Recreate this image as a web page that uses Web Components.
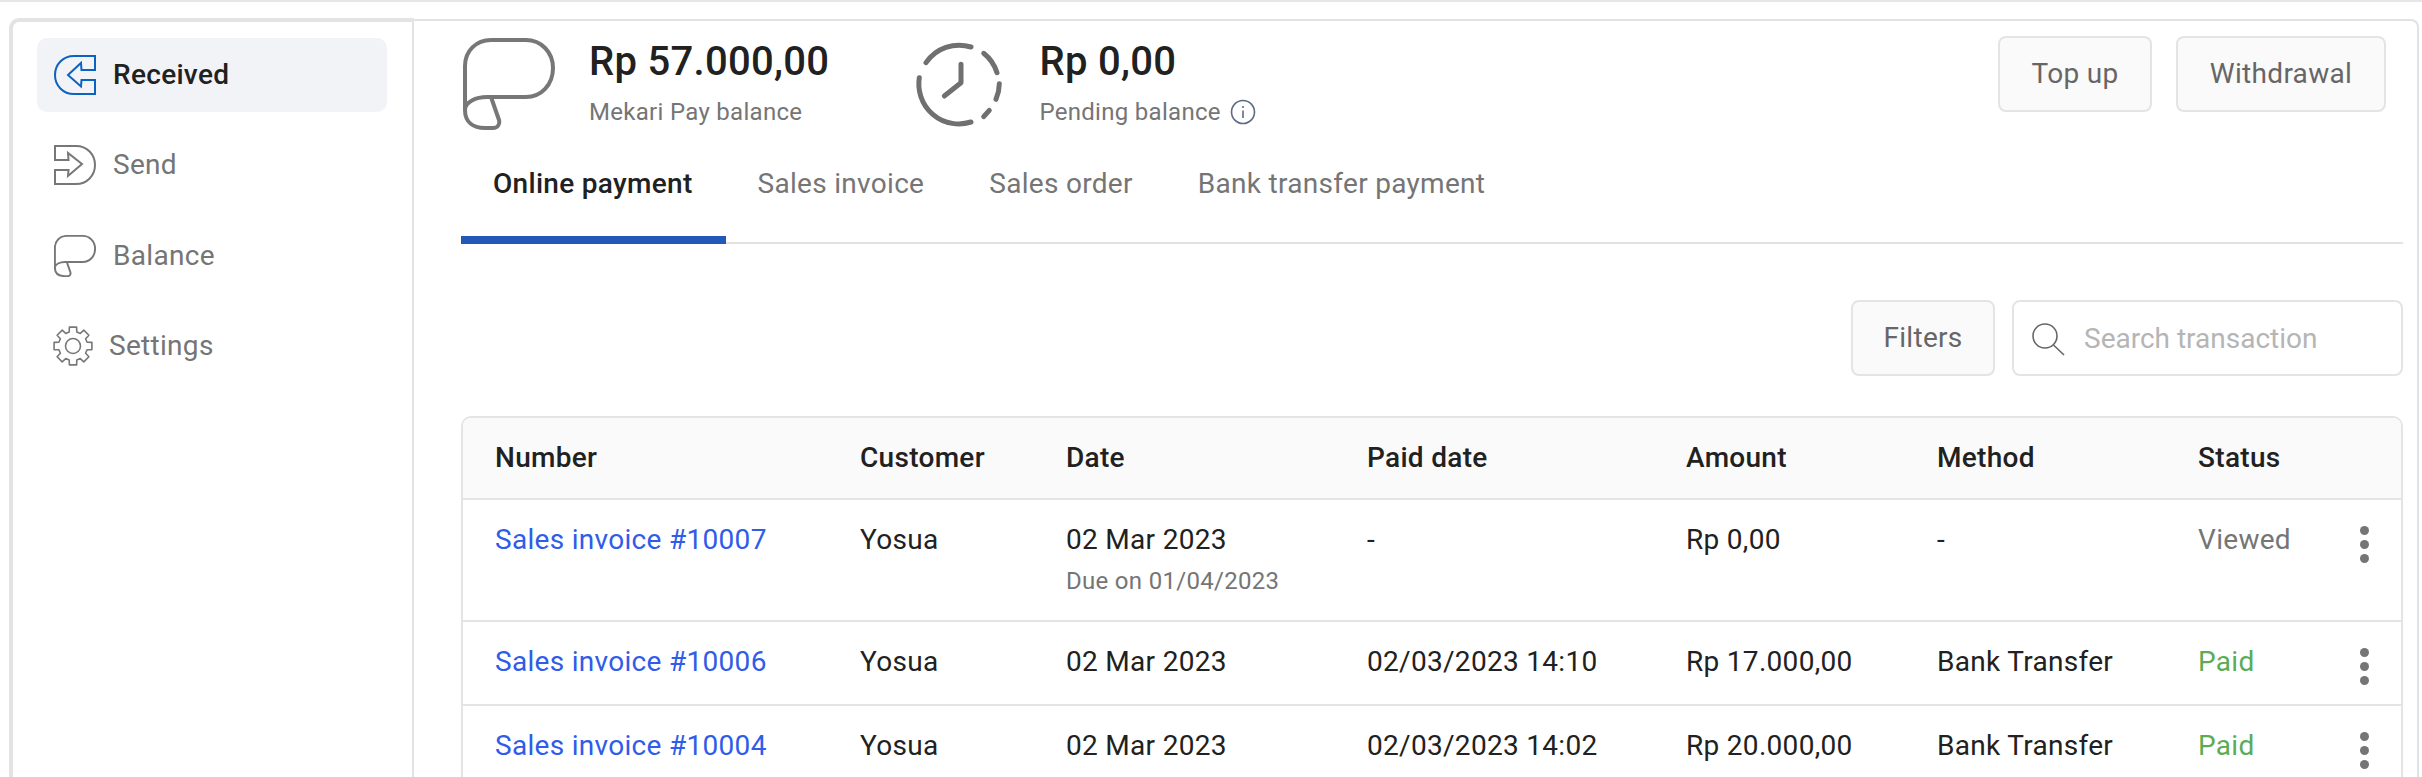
<!DOCTYPE html>
<html>
<head>
<meta charset="utf-8">
<title>Mekari Pay</title>
<style>
    html, body { margin: 0; height: 777px; overflow: hidden; background: #fff; }
    body { font-family: Roboto, "Liberation Sans", sans-serif; color: #212121; letter-spacing: 0.3px; }
</style>
</head>
<body>
<app-shell>
    <side-nav slot="nav">
        <nav-item active label="Received" icon="received"></nav-item>
        <nav-item label="Send" icon="send"></nav-item>
        <nav-item label="Balance" icon="balance"></nav-item>
        <nav-item label="Settings" icon="settings"></nav-item>
    </side-nav>
    <balance-head>
        <balance-stat slot="stats" icon="balance" value="Rp 57.000,00" label="Mekari Pay balance"></balance-stat>
        <balance-stat slot="stats" icon="clock" value="Rp 0,00" label="Pending balance" info></balance-stat>
        <tool-button slot="actions" width="154">Top up</tool-button>
        <tool-button slot="actions" width="210">Withdrawal</tool-button>
    </balance-head>
    <tab-bar>
        <tab-item active>Online payment</tab-item>
        <tab-item>Sales invoice</tab-item>
        <tab-item>Sales order</tab-item>
        <tab-item>Bank transfer payment</tab-item>
    </tab-bar>
    <tool-bar>
        <tool-button width="144">Filters</tool-button>
        <search-box placeholder="Search transaction"></search-box>
    </tool-bar>
    <tx-table>
        <tx-row head>
            <span>Number</span><span>Customer</span><span>Date</span><span>Paid date</span><span>Amount</span><span>Method</span><span>Status</span>
        </tx-row>
        <tx-row>
            <a>Sales invoice #10007</a><span>Yosua</span><span>02 Mar 2023<small>Due on 01/04/2023</small></span><span>-</span><span>Rp 0,00</span><span>-</span><em class="viewed">Viewed</em><row-menu></row-menu>
        </tx-row>
        <tx-row>
            <a>Sales invoice #10006</a><span>Yosua</span><span>02 Mar 2023</span><span>02/03/2023 14:10</span><span>Rp 17.000,00</span><span>Bank Transfer</span><em class="paid">Paid</em><row-menu></row-menu>
        </tx-row>
        <tx-row>
            <a>Sales invoice #10004</a><span>Yosua</span><span>02 Mar 2023</span><span>02/03/2023 14:02</span><span>Rp 20.000,00</span><span>Bank Transfer</span><em class="paid">Paid</em><row-menu></row-menu>
        </tx-row>
    </tx-table>
</app-shell>

<script>
// 8 tooth gear, drawn around 20,20 in a 40 box
function gearPath() {
    let d = "";
    const n = 8;
    for (let i = 0; i < n; i++) {
        const a = (i / n) * Math.PI * 2 - Math.PI / 2;
        const pts = [[14.6, -0.26], [19.2, -0.19], [19.2, 0.19], [14.6, 0.26]];
        pts.forEach(([r, off], j) => {
            const x = 20 + r * Math.cos(a + off);
            const y = 20 + r * Math.sin(a + off);
            d += (i === 0 && j === 0 ? "M" : "L") + x.toFixed(1) + " " + y.toFixed(1);
        });
    }
    return d + "Z";
}

const balancePath = "M2 72V28C2 13 13 2 28 2H63C78 2 90 14 90 30C90 47 78 59 63 59H24C13 59 2 64 2 72C2 84 10 90 22 90H30C35 90 37 86 36 82L28 59";

const ICONS = {
    received: `<svg width="42" height="40" viewBox="0 0 42 40" fill="none" stroke="#0b63c1" stroke-width="2"><path d="M41 1H20C9 1 1 9.5 1 20S9 39 20 39H41V25H27.5L27 31.5L14 20L27 8L27.5 15H41Z"/></svg>`,
    send: `<svg width="42" height="40" viewBox="0 0 42 40" fill="none" stroke="#777" stroke-width="2"><path d="M1 1H22C33 1 41 9.5 41 20S33 39 22 39H1V25H14.500L14 31L28 19L14 8L14.500 15H1Z"/></svg>`,
    balance: `<svg width="42" height="42" viewBox="0 0 92 92" fill="none" stroke="#777" stroke-width="4.2" stroke-linejoin="round"><path d="${balancePath}"/></svg>`,
    settings: `<svg width="40" height="40" viewBox="0 0 40 40" fill="none" stroke="#777" stroke-width="1.6" stroke-linejoin="round"><path d="${gearPath()}"/><circle cx="20" cy="20" r="7.500"/></svg>`,
    bigBalance: `<svg width="92" height="92" viewBox="0 0 92 92" fill="none" stroke="#777" stroke-width="4" stroke-linejoin="round"><path d="${balancePath}"/></svg>`,
    clock: `<svg width="92" height="92" viewBox="0 0 92 92" fill="none" stroke="#707070" stroke-width="5" stroke-linecap="round" stroke-linejoin="round"><path d="M14 24.700A40 40 0 0 1 59 9"/><path d="M71.700 15.300A40 40 0 0 1 85 34.700"/><path d="M87.300 45.700A40 40 0 0 1 84 61.300"/><path d="M77.300 72.300L71.700 78.700"/><path d="M59 84A40 40 0 0 1 7.300 39.700"/><path d="M49 26.300V44.700L32.300 58"/></svg>`
};

class AppShell extends HTMLElement {
    constructor() {
        super();
        this.attachShadow({ mode: "open" });
    }

    connectedCallback() {
        this.shadowRoot.innerHTML = `
            <style>
                :host { display: block; border-top: 2px solid #e6e6e6; padding: 16px 3px 0 9px; }
                .frame { display: flex; align-items: flex-start; }
                main {
                    flex: 1;
                    min-width: 0;
                    margin-top: 1px;
                    padding: 15px 14px 0 47px;
                    border-top: 2px solid #dfe3e6;
                    border-right: 2px solid #dfe3e6;
                    border-top-right-radius: 8px;
                }
            </style>
            <div class="frame">
                <slot name="nav"></slot>
                <main><slot></slot></main>
            </div>
        `;
    }
}

class SideNav extends HTMLElement {
    constructor() {
        super();
        this.attachShadow({ mode: "open" });
    }

    connectedCallback() {
        this.shadowRoot.innerHTML = `
            <style>
                :host {
                    display: flex;
                    flex-direction: column;
                    gap: 16.33px;
                    width: 350px;
                    height: 800px;
                    padding: 16px 25px 0 24px;
                    border-left: 4px solid #e3e3e3;
                    border-top: 4px solid #e3e3e3;
                    border-right: 2px solid #dfe3e6;
                    border-top-left-radius: 10px;
                }
            </style>
            <slot></slot>
        `;
    }
}

class NavItem extends HTMLElement {
    constructor() {
        super();
        this.attachShadow({ mode: "open" });
    }

    connectedCallback() {
        const icon = this.getAttribute("icon");
        const isGear = icon === "settings";
        // text sits a pixel higher on the first two rows
        const lift = icon === "received" || icon === "send" ? 2 : 0;
        this.shadowRoot.innerHTML = `
            <style>
                :host {
                    display: flex;
                    align-items: center;
                    gap: ${isGear ? 16 : 17}px;
                    height: 74px;
                    padding-left: ${isGear ? 16 : 17}px;
                    border-radius: 10px;
                    font-size: 28px;
                    color: #757575;
                }
                :host([active]) { background: #f2f3f7; color: #212121; font-weight: 500; }
                svg { display: block; flex: none; }
                span { padding-bottom: ${lift}px; }
            </style>
            ${ICONS[icon]}
            <span>${this.getAttribute("label")}</span>
        `;
    }
}

class BalanceHead extends HTMLElement {
    constructor() {
        super();
        this.attachShadow({ mode: "open" });
    }

    connectedCallback() {
        this.shadowRoot.innerHTML = `
            <style>
                :host { display: flex; justify-content: space-between; align-items: flex-start; height: 114px; }
                .stats { display: flex; gap: 83px; padding: 2px 0 0 2px; }
                .actions { display: flex; gap: 24px; padding-right: 17px; }
            </style>
            <div class="stats"><slot name="stats"></slot></div>
            <div class="actions"><slot name="actions"></slot></div>
        `;
    }
}

class BalanceStat extends HTMLElement {
    constructor() {
        super();
        this.attachShadow({ mode: "open" });
    }

    connectedCallback() {
        const icon = this.getAttribute("icon") === "clock" ? ICONS.clock : ICONS.bigBalance;
        const info = this.hasAttribute("info") ? `
            <svg width="26" height="26" viewBox="0 0 26 26" fill="none" stroke="#5b6b85" stroke-width="1.600">
                <circle cx="13" cy="13" r="11.500"/>
                <path d="M13 11.500V19"/><path d="M13 7V9"/>
            </svg>` : "";
        this.shadowRoot.innerHTML = `
            <style>
                :host { display: flex; gap: 34px; }
                :host([info]) { gap: 35px; }
                svg { display: block; flex: none; }
                .value { font-size: 40px; font-weight: 500; line-height: 48px; color: #212121; }
                .label {
                    display: flex;
                    align-items: center;
                    gap: 9px;
                    margin-top: 10px;
                    font-size: 24px;
                    line-height: 32px;
                    color: #757575;
                }
                .label svg { margin-top: -1px; }
            </style>
            ${icon}
            <div>
                <div class="value">${this.getAttribute("value")}</div>
                <div class="label"><span>${this.getAttribute("label")}</span>${info}</div>
            </div>
        `;
    }
}

class ToolButton extends HTMLElement {
    constructor() {
        super();
        this.attachShadow({ mode: "open" });
    }

    connectedCallback() {
        this.shadowRoot.innerHTML = `
            <style>
                :host {
                    display: flex;
                    align-items: center;
                    justify-content: center;
                    box-sizing: border-box;
                    width: ${this.getAttribute("width")}px;
                    height: 76px;
                    padding-bottom: 2px;
                    background: #fafafa;
                    border: 2px solid #e4e4e4;
                    border-radius: 8px;
                    font-size: 28px;
                    color: #666;
                }
            </style>
            <slot></slot>
        `;
    }
}

class TabBar extends HTMLElement {
    constructor() {
        super();
        this.attachShadow({ mode: "open" });
    }

    connectedCallback() {
        this.shadowRoot.innerHTML = `
            <style>
                :host { display: flex; height: 94px; box-sizing: border-box; border-bottom: 2px solid #e2e2e2; }
            </style>
            <slot></slot>
        `;
    }
}

class TabItem extends HTMLElement {
    constructor() {
        super();
        this.attachShadow({ mode: "open" });
    }

    connectedCallback() {
        this.shadowRoot.innerHTML = `
            <style>
                :host {
                    display: block;
                    box-sizing: border-box;
                    height: 94px;
                    padding: 16px 33px 0 32px;
                    font-size: 28px;
                    line-height: 36px;
                    color: #757575;
                }
                :host([active]) { color: #212121; font-weight: 500; border-bottom: 8px solid #2358b8; }
            </style>
            <slot></slot>
        `;
    }
}

class ToolBar extends HTMLElement {
    constructor() {
        super();
        this.attachShadow({ mode: "open" });
    }

    connectedCallback() {
        this.shadowRoot.innerHTML = `
            <style>
                :host { display: flex; justify-content: flex-end; gap: 17px; padding: 56px 0 40px; }
            </style>
            <slot></slot>
        `;
    }
}

class SearchBox extends HTMLElement {
    constructor() {
        super();
        this.attachShadow({ mode: "open" });
    }

    connectedCallback() {
        this.shadowRoot.innerHTML = `
            <style>
                :host {
                    display: flex;
                    align-items: center;
                    gap: 19px;
                    box-sizing: border-box;
                    width: 391px;
                    height: 76px;
                    padding-left: 18px;
                    border: 2px solid #e4e4e4;
                    border-radius: 8px;
                    font-size: 28px;
                    letter-spacing: 0;
                    color: #b5b5b5;
                }
                svg { display: block; flex: none; margin-top: 2px; }
            </style>
            <svg width="33" height="33" viewBox="0 0 33 33" fill="none" stroke="#666" stroke-width="1.600">
                <circle cx="13" cy="13" r="12"/><path d="M21.500 22L32 32"/>
            </svg>
            <span>${this.getAttribute("placeholder")}</span>
        `;
    }
}

class TxTable extends HTMLElement {
    constructor() {
        super();
        this.attachShadow({ mode: "open" });
    }

    connectedCallback() {
        this.shadowRoot.innerHTML = `
            <style>
                :host {
                    display: block;
                    border: 2px solid #e4e4e4;
                    border-bottom: 0;
                    border-radius: 10px 10px 0 0;
                    overflow: hidden;
                }
            </style>
            <slot></slot>
        `;
    }
}

class TxRow extends HTMLElement {
    constructor() {
        super();
        this.attachShadow({ mode: "open" });
    }

    connectedCallback() {
        this.shadowRoot.innerHTML = `
            <style>
                :host {
                    display: grid;
                    grid-template-columns: 365px 206px 301px 319px 251px 261px 162px 10px;
                    padding: 22px 0 24px 32px;
                    border-bottom: 2px solid #e4e4e4;
                    font-size: 28px;
                    line-height: 36px;
                    color: #212121;
                }
                :host([head]) { background: #fafafa; font-weight: 500; padding-bottom: 22px; }
                ::slotted(a) { color: #2f5ce8; }
                ::slotted(em) { font-style: normal; }
                ::slotted(.viewed) { color: #757575; }
                ::slotted(.paid) { color: #5cab55; }
            </style>
            <slot></slot>
        `;
        // small line under the date lives in light DOM, style it from here
        this.querySelectorAll("small").forEach((el) => {
            el.style.cssText = "display:block;margin-top:8px;font-size:24px;line-height:30px;color:#757575";
        });
    }
}

class RowMenu extends HTMLElement {
    constructor() {
        super();
        this.attachShadow({ mode: "open" });
    }

    connectedCallback() {
        this.shadowRoot.innerHTML = `
            <style>
                :host { display: flex; flex-direction: column; gap: 5px; box-sizing: border-box; height: 36px; padding-top: 4px; }
                i { display: block; flex: none; width: 9px; height: 9px; border-radius: 50%; background: #757575; }
            </style>
            <i></i><i></i><i></i>
        `;
    }
}

customElements.define("app-shell", AppShell);
customElements.define("side-nav", SideNav);
customElements.define("nav-item", NavItem);
customElements.define("balance-head", BalanceHead);
customElements.define("balance-stat", BalanceStat);
customElements.define("tool-button", ToolButton);
customElements.define("tab-bar", TabBar);
customElements.define("tab-item", TabItem);
customElements.define("tool-bar", ToolBar);
customElements.define("search-box", SearchBox);
customElements.define("tx-table", TxTable);
customElements.define("tx-row", TxRow);
customElements.define("row-menu", RowMenu);
</script>
</body>
</html>
